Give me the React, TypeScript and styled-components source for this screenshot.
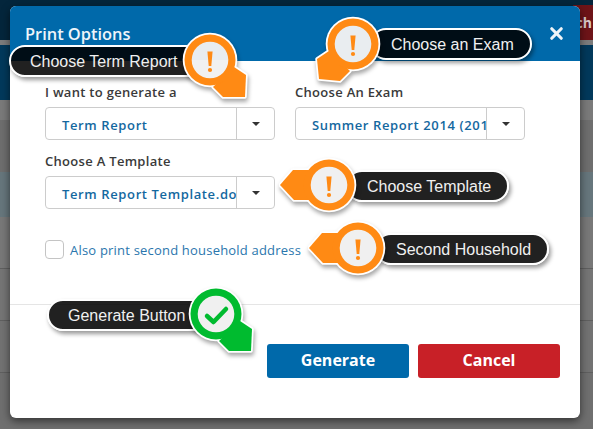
import React from 'react'
import styled, { createGlobalStyle } from 'styled-components'
import { X } from 'lucide-react'

const TAILS: any = {
  downRight: '74,57 86,65 85,87 63,87 53,77',
  downLeft: '26,57 14,65 16,85 37,87 47,77',
  left: '30,35 14,35 1,50 15,65 30,65',
}

const Marker = ({ x, y, tail, color = '#ff8a14', inner = '#f0f0f0', ok, split }: any) => {
  const id = `split-${x}`
  return (
    <MarkerSvg $x={x} $y={y} width="100" height="100" viewBox="0 0 100 100">
      {split && (
        <defs>
          <linearGradient id={id} x1="0" y1="0" x2="0" y2="1">
            <stop offset="0.5" stopColor="#e8ecef" />
            <stop offset="0.5" stopColor="#f1f1f1" />
          </linearGradient>
        </defs>
      )}
      <polygon points={TAILS[tail]} fill="#fff" stroke="#fff" strokeWidth="3.5" strokeLinejoin="round" />
      <circle cx="50" cy="50" r="27.3" fill="#fff" />
      <polygon points={TAILS[tail]} fill={color} />
      <circle cx="50" cy="50" r="25.5" fill={color} />
      <circle cx="50" cy="50" r="18.3" fill={split ? `url(#${id})` : inner} />
      {ok ? (
        <polyline points="41,52 47.5,58 60,45" fill="none" stroke={color} strokeWidth="4.5" strokeLinecap="round" strokeLinejoin="round" />
      ) : (
        <>
          <polygon points="47.4,41.5 52.6,41.5 51.3,56 48.7,56" fill={color} />
          <circle cx="50" cy="60" r="2.1" fill={color} />
        </>
      )}
    </MarkerSvg>
  )
}

const Select = ({ value }: any) => (
  <SelectBox>
    <SelectValue>{value}</SelectValue>
    <SelectArrow>
      <Caret />
    </SelectArrow>
  </SelectBox>
)

const App = () => {
  return (
    <Page>
      <GlobalStyle />
      <TopBand>
        <RedTab>ch</RedTab>
      </TopBand>
      <GreyRule />
      <NavBand />
      <Row $h={20} $bg="#7a7a7a" />
      <Row $h={52} $bg="#6e6e6e" />
      <Row $h={45} $bg="#66767c" />
      <Row $h={51} $bg="#787878" />
      <Row $h={52} $bg="#757575" $line />
      <Row $h={52} $bg="#727272" $line />
      <Row $h={57} $bg="#6f6f6f" $line />

      <Modal>
        <Header>
          <Title>Print Options</Title>
          <CloseButton>
            <X size={19} strokeWidth={4} color="#eef4f8" />
          </CloseButton>
        </Header>
        <Body>
          <Fields>
            <Field>
              <FieldLabel>I want to generate a</FieldLabel>
              <Select value="Term Report" />
            </Field>
            <Field>
              <FieldLabel>Choose An Exam</FieldLabel>
              <Select value="Summer Report 2014 (201" />
            </Field>
            <Field>
              <FieldLabel>Choose A Template</FieldLabel>
              <Select value="Term Report Template.do" />
            </Field>
          </Fields>
          <CheckRow>
            <CheckBox />
            <CheckLabel>Also print second household address</CheckLabel>
          </CheckRow>
        </Body>
        <Divider />
        <Footer>
          <ActionButton $bg="#0069aa">Generate</ActionButton>
          <ActionButton $bg="#c82027">Cancel</ActionButton>
        </Footer>
      </Modal>

      <Pill $x={9} $y={45} $pr={24}>Choose Term Report</Pill>
      <Marker x={210} y={60} tail="downRight" split />
      <Pill $x={370} $y={28}>Choose an Exam</Pill>
      <Marker x={353} y={44} tail="downLeft" inner="#e9edf0" />
      <Pill $x={346} $y={170}>Choose Template</Pill>
      <Marker x={329} y={185} tail="left" />
      <Pill $x={375} $y={233}>Second Household</Pill>
      <Marker x={358} y={248} tail="left" />
      <Pill $x={47} $y={299} $pr={24}>Generate Button</Pill>
      <Marker x={216} y={314} tail="downRight" color="#00bb2f" ok />
    </Page>
  )
}

export default App

const GlobalStyle = createGlobalStyle`
  html, body {
    margin: 0;
    padding: 0;
    background: #707070;
    overflow: hidden;
  }
`

const Page = styled.div`
  position: relative;
  width: 593px;
  height: 429px;
  overflow: hidden;
  font-family: "Open Sans", "Liberation Sans", sans-serif;
`

const TopBand = styled.div`
  height: 40px;
  background: #04263c;
  display: flex;
  justify-content: flex-end;
  align-items: flex-end;
`

const RedTab = styled.div`
  width: 20px;
  height: 35px;
  box-sizing: border-box;
  padding-right: 1px;
  background: #6e1418;
  color: #d9c9ca;
  font-size: 14px;
  font-weight: 700;
  line-height: 36px;
  text-align: right;
`

const GreyRule = styled.div`
  height: 5px;
  background: #7c7c7c;
`

const NavBand = styled.div`
  height: 55px;
  background: #02395b;
`

const Row = styled.div<{ $h: number; $bg: string; $line?: boolean }>`
  height: ${(p) => p.$h}px;
  box-sizing: border-box;
  background: ${(p) => p.$bg};
  border-top: ${(p) => (p.$line ? '1px solid #5f5f5f' : 'none')};
`

const Modal = styled.div`
  position: absolute;
  left: 10px;
  top: 6px;
  width: 570px;
  height: 412px;
  display: flex;
  flex-direction: column;
  background: #fff;
  border-radius: 6px;
  box-shadow: 0 3px 9px rgba(0, 0, 0, 0.55);
  overflow: hidden;
`

const Header = styled.div`
  height: 55px;
  flex: none;
  box-sizing: border-box;
  padding: 16px 14px 0 15px;
  background: #0069aa;
  display: flex;
  justify-content: space-between;
  align-items: flex-start;
`

const Title = styled.div`
  color: #eef5fa;
  font-size: 16.4px;
  font-weight: 600;
  line-height: 24px;
`

const CloseButton = styled.div`
  display: flex;
  margin-top: 2px;
`

const Body = styled.div`
  padding: 23px 35px 0;
`

const Fields = styled.div`
  display: grid;
  grid-template-columns: 230px 230px;
  column-gap: 20px;
  row-gap: 13px;
`

const Field = styled.div`
  display: flex;
  flex-direction: column;
`

const FieldLabel = styled.div`
  height: 23px;
  color: #3a3a3a;
  font-size: 13px;
  font-weight: 600;
  line-height: 17px;
  letter-spacing: 0.3px;
`

const SelectBox = styled.div`
  height: 33px;
  box-sizing: border-box;
  display: flex;
  border: 1px solid #cccccc;
  border-radius: 4px;
  background: #fff;
`

const SelectValue = styled.div`
  flex: 1;
  min-width: 0;
  padding: 0 0 0 16px;
  color: #14689f;
  font-size: 13px;
  font-weight: 600;
  line-height: 35px;
  letter-spacing: 0.62px;
  white-space: nowrap;
`

const SelectArrow = styled.div`
  width: 37px;
  flex: none;
  border-left: 1px solid #cccccc;
  display: flex;
  align-items: center;
  justify-content: center;
`

const Caret = styled.span`
  width: 0;
  height: 0;
  border-left: 4px solid transparent;
  border-right: 4px solid transparent;
  border-top: 4px solid #333;
`

const CheckRow = styled.div`
  margin-top: 31px;
  height: 19px;
  display: flex;
  align-items: center;
  gap: 6px;
`

const CheckBox = styled.span`
  width: 19px;
  height: 19px;
  box-sizing: border-box;
  border: 1px solid #c4c4c4;
  border-radius: 4px;
`

const CheckLabel = styled.span`
  color: #2a76ad;
  font-size: 13px;
  letter-spacing: 0.2px;
`

const Divider = styled.div`
  height: 1px;
  flex: none;
  margin-top: 45px;
  background: #e5e5e5;
`

const Footer = styled.div`
  padding: 39px 20px 0 0;
  display: flex;
  justify-content: flex-end;
  gap: 9px;
`

const ActionButton = styled.div<{ $bg: string }>`
  width: 142px;
  height: 34px;
  border-radius: 3px;
  background: ${(p) => p.$bg};
  color: #fff;
  font-size: 16px;
  font-weight: 700;
  line-height: 33px;
  text-align: center;
`

const Pill = styled.div<{ $x: number; $y: number; $pr?: number }>`
  position: absolute;
  left: ${(p) => p.$x}px;
  top: ${(p) => p.$y}px;
  height: 32px;
  box-sizing: border-box;
  padding: 0 ${(p) => p.$pr ?? 16}px 0 19px;
  border: 2px solid #fff;
  border-radius: 16px;
  background: rgba(0, 0, 0, 0.87);
  box-shadow: 2px 3px 4px rgba(0, 0, 0, 0.4);
  color: #f0f0f0;
  font-family: "Liberation Sans", Arial, sans-serif;
  font-size: 16px;
  line-height: 29px;
  white-space: nowrap;
`

const MarkerSvg = styled.svg<{ $x: number; $y: number }>`
  position: absolute;
  left: ${(p) => p.$x - 50}px;
  top: ${(p) => p.$y - 50}px;
  filter: drop-shadow(1px 3px 2px rgba(0, 0, 0, 0.35));
`
